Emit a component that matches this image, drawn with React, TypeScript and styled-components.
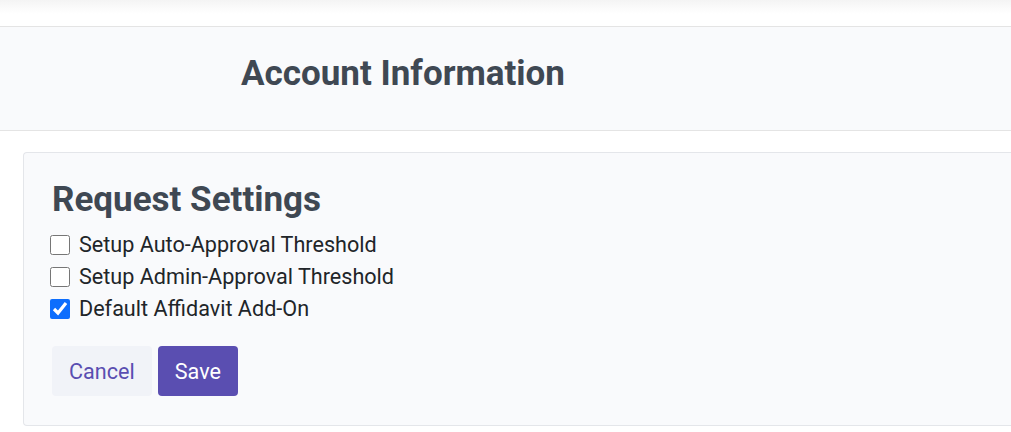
import React, { useState } from "react";
import styled, { createGlobalStyle } from "styled-components";

const GlobalStyle = createGlobalStyle`
  html, body {
    margin: 0;
    padding: 0;
    background: #ffffff;
    overflow: hidden;
  }
  body {
    font-family: Roboto, "Liberation Sans", Arial, sans-serif;
  }
`;

type Setting = {
  id: string;
  label: string;
  checked: boolean;
};

const initialSettings: Setting[] = [
  { id: "auto", label: "Setup Auto-Approval Threshold", checked: false },
  { id: "admin", label: "Setup Admin-Approval Threshold", checked: false },
  { id: "affidavit", label: "Default Affidavit Add-On", checked: true },
];

export default function App() {
  const [settings, setSettings] = useState(initialSettings);

  const onToggle = (id: string) => {
    setSettings((prev) =>
      prev.map((item) =>
        item.id === id ? { ...item, checked: !item.checked } : item
      )
    );
  };

  return (
    <>
      <GlobalStyle />
      <Page>
        <TopShade />
        <PageHeader>
          <PageTitle>Account Information</PageTitle>
        </PageHeader>
        <Content>
          <Card>
            <CardTitle>Request Settings</CardTitle>
            <OptionList>
              {settings.map((item) => (
                <OptionRow key={item.id}>
                  <Checkbox
                    type="checkbox"
                    checked={item.checked}
                    onChange={() => onToggle(item.id)}
                  />
                  <OptionLabel>{item.label}</OptionLabel>
                </OptionRow>
              ))}
            </OptionList>
            <ButtonsContainer>
              <Button $variant="secondary">Cancel</Button>
              <Button $variant="primary">Save</Button>
            </ButtonsContainer>
          </Card>
        </Content>
      </Page>
    </>
  );
}

const Page = styled.div`
  display: flex;
  flex-direction: column;
  width: 100%;
`;

const TopShade = styled.div`
  height: 26px;
  background: linear-gradient(to bottom, #f4f4f4 0px, #fbfbfb 8px, #ffffff 14px);
`;

const PageHeader = styled.header`
  display: flex;
  align-items: center;
  box-sizing: content-box;
  height: 94px;
  padding: 0 0 9px 241px;
  background: #f9fafc;
  border-top: 1px solid #e4e4e4;
  border-bottom: 1px solid #e4e4e4;
`;

const PageTitle = styled.h1`
  margin: 0;
  font-size: 35px;
  font-weight: 700;
  line-height: 40px;
  color: #3f4853;
`;

const Content = styled.main`
  padding: 21px 0 0 23px;
`;

const Card = styled.section`
  display: flex;
  flex-direction: column;
  align-items: flex-start;
  height: 274px;
  box-sizing: border-box;
  padding: 25px 0 0 26px;
  background: #f9fafc;
  border: 1px solid #e4e6ea;
  border-right: none;
  border-radius: 4px 0 0 4px;
`;

const CardTitle = styled.h2`
  margin: 0 0 7px 2px;
  font-size: 35px;
  font-weight: 700;
  line-height: 44px;
  color: #3f4853;
`;

const OptionList = styled.div`
  display: flex;
  flex-direction: column;
`;

const OptionRow = styled.label`
  display: flex;
  align-items: center;
  height: 32px;
  cursor: pointer;
`;

const Checkbox = styled.input`
  width: 20px;
  height: 20px;
  margin: 0 9px 0 0;
  accent-color: #0d6efd;
  cursor: pointer;
`;

const OptionLabel = styled.span`
  font-size: 21.6px;
  line-height: 24px;
  color: #212529;
`;

const ButtonsContainer = styled.div`
  display: flex;
  gap: 6px;
  margin: 21px 0 0 2px;
`;

const Button = styled.button<{ $variant: "primary" | "secondary" }>`
  height: 50px;
  padding: 0 17px;
  border: none;
  border-radius: 4px;
  font-family: Roboto, "Liberation Sans", Arial, sans-serif;
  font-size: 21.6px;
  cursor: pointer;
  background: ${({ $variant }) =>
    $variant === "primary" ? "#5a4eb1" : "#f1f3f8"};
  color: ${({ $variant }) => ($variant === "primary" ? "#ffffff" : "#5a4eb1")};
`;
